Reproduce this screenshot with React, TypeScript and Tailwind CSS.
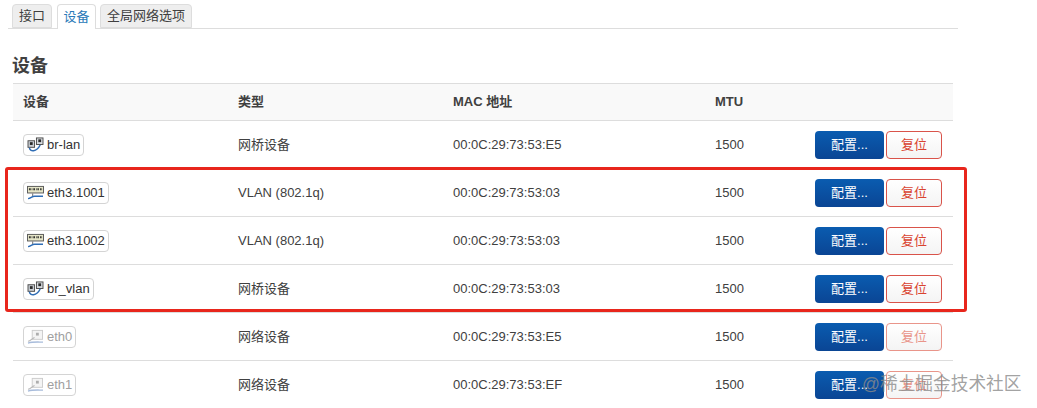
const CJK = "font-['Liberation_Sans','Noto_Sans_CJK_SC',sans-serif]";

function BridgeIcon() {
  return (
    <svg width="17" height="15" viewBox="0 0 18 16">
      <rect x="1" y="4" width="7" height="7" fill="#c9ced4" stroke="#4a4a4a" />
      <rect x="3" y="5.5" width="3" height="3" fill="#2b2b2b" />
      <rect x="10" y="1" width="7" height="7" fill="#d6dade" stroke="#4a4a4a" />
      <rect x="12" y="2.5" width="3" height="3" fill="#2b2b2b" />
      <path d="M2.5 11.5 C3 16 10 16.5 14 8.5" fill="none" stroke="#2f6db5" strokeWidth="1.6" />
    </svg>
  );
}

function SwitchIcon() {
  return (
    <svg width="17" height="15" viewBox="0 0 18 16">
      <rect x="0.5" y="1.5" width="17" height="7" fill="#e6e6c8" stroke="#555" />
      <path d="M2 4.5h2.5M6 4.5h2.5M10 4.5h2.5M14 4.5h2" stroke="#1f1f1f" strokeWidth="2" strokeDasharray="1 0.5" />
      <path d="M6 9v3" stroke="#666" />
      <path d="M1 14.5 C4 14.5 5 12 8 12 H17" fill="none" stroke="#2f6db5" strokeWidth="1.5" />
    </svg>
  );
}

function EthIcon() {
  return (
    <svg width="17" height="15" viewBox="0 0 18 16" className="opacity-60">
      <rect x="5.5" y="1.5" width="11" height="9.5" fill="#eeeeee" stroke="#aaaaaa" />
      <rect x="9.5" y="4" width="3" height="3" fill="#777777" />
      <path d="M1 13 C4 13 5 10 8 9" fill="none" stroke="#888888" strokeWidth="1.2" />
      <path d="M1 15 C6 13.5 11 14 17 14" fill="none" stroke="#6f90c4" strokeWidth="1.5" />
    </svg>
  );
}

type Row = {
  name: string;
  icon: "bridge" | "switch" | "eth";
  type: string;
  mac: string;
};

const rows: Row[] = [
  { name: "br-lan", icon: "bridge", type: "网桥设备", mac: "00:0C:29:73:53:E5" },
  { name: "eth3.1001", icon: "switch", type: "VLAN (802.1q)", mac: "00:0C:29:73:53:03" },
  { name: "eth3.1002", icon: "switch", type: "VLAN (802.1q)", mac: "00:0C:29:73:53:03" },
  { name: "br_vlan", icon: "bridge", type: "网桥设备", mac: "00:0C:29:73:53:03" },
  { name: "eth0", icon: "eth", type: "网络设备", mac: "00:0C:29:73:53:E5" },
  { name: "eth1", icon: "eth", type: "网络设备", mac: "00:0C:29:73:53:EF" },
];

function DeviceRow({ row }: { row: Row }) {
  const faded = row.icon === "eth";
  return (
    <div className="grid grid-cols-[215px_215px_262px_1fr] items-center h-12 border-b border-[#dddddd] text-[13px] text-[#404040]">
      <div className="pl-[10px]">
        <span
          className={`inline-flex items-center gap-[3px] h-[22px] pl-[3px] pr-[3px] border border-[#d4d4d4] rounded-[4px] align-middle ${faded ? "text-[#a0a0a0]" : "text-[#333333]"}`}
        >
          {row.icon === "bridge" && <BridgeIcon />}
          {row.icon === "switch" && <SwitchIcon />}
          {row.icon === "eth" && <EthIcon />}
          {row.name}
        </span>
      </div>
      <div className="pl-[10px]">{row.type}</div>
      <div className="pl-[10px]">{row.mac}</div>
      <div className="flex items-center pl-[10px]">
        <span className="w-[100px]">1500</span>
        <button className="w-[69px] h-[28px] rounded-[4px] bg-gradient-to-b from-[#0a5cb0] to-[#0a4594] text-[13px] text-white">
          配置...
        </button>
        <button
          className={`ml-[2px] w-[56px] h-[28px] rounded-[4px] border bg-gradient-to-b from-white to-[#f4f4f4] text-[13px] ${faded ? "border-[#e9958a] text-[#e9958a]" : "border-[#d9534a] text-[#d9432f]"}`}
        >
          复位
        </button>
      </div>
    </div>
  );
}

export default function App() {
  return (
    <div className={`relative h-[408px] w-[1037px] overflow-hidden bg-white ${CJK}`}>
      <div className="ml-2 mr-[79px] pt-1 flex pl-1 border-b border-[#dddddd] h-[29px] text-[13px]">
        <div className="h-6 w-10 flex items-center justify-center bg-[#eeeeee] border border-[#dddddd] rounded-t-[4px] text-[#404040]">接口</div>
        <div className="ml-[5px] h-[25px] w-[39px] flex items-center justify-center bg-white border border-[#dddddd] border-b-0 rounded-t-[4px] text-[#2a7ab8]">设备</div>
        <div className="ml-1 h-6 w-[92px] flex items-center justify-center bg-[#eeeeee] border border-[#dddddd] rounded-t-[4px] text-[#404040]">全局网络选项</div>
      </div>

      <h3 className="ml-3 mt-[25px] h-[29px] text-[18px] leading-[24px] font-bold text-[#404040]">设备</h3>

      <div className="ml-[13px] w-[940px]">
        <div className="grid grid-cols-[215px_215px_262px_1fr] items-center h-[38px] bg-[#f9f9f9] border-y border-[#dddddd] text-[13px] font-bold text-[#404040]">
          <div className="pl-[10px]">设备</div>
          <div className="pl-[10px]">类型</div>
          <div className="pl-[10px]">MAC 地址</div>
          <div className="pl-[10px]">MTU</div>
        </div>
        {rows.map((row) => (
          <DeviceRow key={row.name} row={row} />
        ))}
      </div>

      {/* red highlight drawn over the screenshot */}
      <div className="absolute left-[5px] top-[167px] w-[962px] h-[145px] border-[3px] border-[#e8261c] rounded-[3px]" />

      {/* watermark */}
      <div className="absolute left-[862px] top-[372px] text-[17.7px] leading-[24px] text-[#8a8a8a]/80">@稀土掘金技术社区</div>
    </div>
  );
}
